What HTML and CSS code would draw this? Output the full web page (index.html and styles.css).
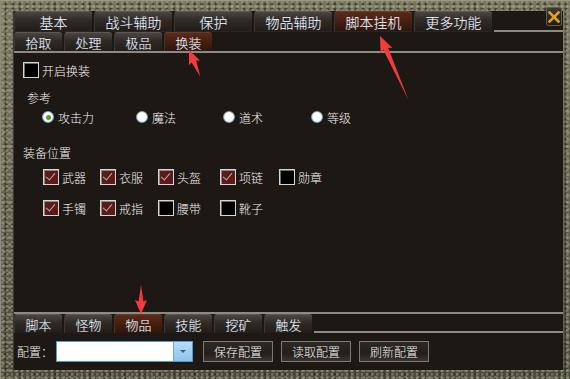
FILE: index.html
```html
<!DOCTYPE html>
<html>
<head>
<meta charset="utf-8">
<link rel="stylesheet" href="styles.css">
</head>
<body>
<div class="frame">
  <div class="panel">
    <div class="tabrow top">
      <div class="tab wide">基本</div>
      <div class="tab wide">战斗辅助</div>
      <div class="tab wide">保护</div>
      <div class="tab wide">物品辅助</div>
      <div class="tab wide active">脚本挂机</div>
      <div class="tab wide">更多功能</div>
      <div class="rest"></div>
    </div>
    <div class="tabrow sub">
      <div class="tab">拾取</div>
      <div class="tab">处理</div>
      <div class="tab">极品</div>
      <div class="tab active">换装</div>
      <div class="rest"></div>
    </div>
    <div class="content">
      <label class="check main-check"><span class="box"></span>开启换装</label>
      <div class="section-title ref">参考</div>
      <div class="radios">
        <label class="radio r1"><span class="dot on"></span>攻击力</label>
        <label class="radio r2"><span class="dot"></span>魔法</label>
        <label class="radio r3"><span class="dot"></span>道术</label>
        <label class="radio r4"><span class="dot"></span>等级</label>
      </div>
      <div class="section-title equip">装备位置</div>
      <div class="grid">
        <label class="check"><span class="box on"></span>武器</label>
        <label class="check"><span class="box on"></span>衣服</label>
        <label class="check"><span class="box on"></span>头盔</label>
        <label class="check"><span class="box on"></span>项链</label>
        <label class="check"><span class="box"></span>勋章</label>
        <label class="check"><span class="box on"></span>手镯</label>
        <label class="check"><span class="box on"></span>戒指</label>
        <label class="check"><span class="box"></span>腰带</label>
        <label class="check"><span class="box"></span>靴子</label>
      </div>
    </div>
    <div class="tabrow bottom">
      <div class="tab">脚本</div>
      <div class="tab">怪物</div>
      <div class="tab active">物品</div>
      <div class="tab">技能</div>
      <div class="tab">挖矿</div>
      <div class="tab">触发</div>
      <div class="rest"></div>
    </div>
    <div class="config">
      <span class="cfg-label">配置：</span>
      <div class="combo"><div class="combo-field"></div><div class="combo-btn"><span class="tri"></span></div></div>
      <button class="btn">保存配置</button>
      <button class="btn">读取配置</button>
      <button class="btn">刷新配置</button>
    </div>
  </div>
  <div class="close">
    <svg width="12" height="12" viewBox="0 0 12 12"><path d="M1.5 1.5 L10.5 10.5 M10.5 1.5 L1.5 10.5" stroke="#e0a020" stroke-width="2.6" stroke-linecap="square"/></svg>
  </div>
  <svg class="arrows" width="570" height="379" viewBox="0 0 570 379">
    <g fill="#f03c3c">
      <polygon transform="translate(188 49) rotate(-23)" points="0,0 6,14 2.4,12.5 0,29 -2.4,12.5 -6,14"/>
      <polygon transform="translate(379 35) rotate(-24)" points="0,0 6.5,16 2.6,14 0,70 -2.6,14 -6.5,16"/>
      <polygon transform="translate(140 313) rotate(180)" points="0,0 6,14 2.4,12.5 0,29 -2.4,12.5 -6,14"/>
    </g>
  </svg>
</div>
</body>
</html>
```
FILE: styles.css
```css
* { box-sizing: border-box; }
html, body { margin: 0; padding: 0; }
body { width: 570px; height: 379px; overflow: hidden; background: #2a2a24; font-family: "Noto Sans CJK SC", "Noto Sans", sans-serif; }

.frame {
  position: relative;
  width: 570px;
  height: 379px;
  padding: 10px 8px 10px 12px;
  background-color: #5e5d50;
  background-image:
    radial-gradient(circle at 20% 30%, rgba(160,158,130,0.55) 0 1px, transparent 2px),
    radial-gradient(circle at 70% 60%, rgba(30,30,25,0.6) 0 1px, transparent 2px),
    radial-gradient(circle at 45% 80%, rgba(190,190,160,0.45) 0 1px, transparent 2px),
    linear-gradient(180deg, #77765f 0%, #4d4c40 100%);
  background-size: 5px 4px, 7px 5px, 6px 7px, 100% 100%;
  border-top: 1px solid #9c9a80;
  border-left: 1px solid #8e8c78;
}

.panel {
  width: 550px;
  height: 359px;
  display: flex;
  flex-direction: column;
  background: #1e1814;
  border-left: 1px solid #3c3731;
}

.tabrow { display: flex; gap: 2px; height: 20px; flex: none; }
.tabrow.top { height: 21px; }
.tabrow .rest { flex: 1; }
.tabrow.top .rest { border-bottom: 2px solid #8d8a84; }
.tabrow.sub { height: 21px; border-bottom: 2px solid #8d8a84; }
.tabrow.bottom { height: 21px; border-top: 2px solid #8d8a84; }
.tabrow.bottom .rest { border-bottom: 2px solid #8d8a84; }

.tab {
  width: 48px;
  display: flex;
  align-items: center;
  justify-content: center;
  color: #f6f6f6;
  font-size: 13px;
  font-weight: 300;
  line-height: 1;
  background: linear-gradient(180deg, #4a4540 0%, #2f2a26 45%, #221d19 100%);
  border-top: 1px solid #5d5852;
  border-left: 1px solid #3b3632;
  border-radius: 3px 3px 0 0;
  text-shadow: -0.4px 0 0 rgba(120,190,255,0.45);
}
.tab.wide { width: 78px; font-size: 14px; }
.tabrow.top .tab { border-bottom: 1px solid #2a2521; }
.tab.active { background: linear-gradient(180deg, #5a2a1c 0%, #47200f 45%, #2e150d 100%); border-top-color: #6b3a2b; }

.content {
  flex: 1;
  position: relative;
  padding: 9px 0 0 9px;
  color: #f2f2f2;
  font-size: 12px;
  font-weight: 300;
}

.check { display: flex; align-items: center; gap: 3px; line-height: 15px; color: #f4f4f4; }
.box {
  width: 16px; height: 16px; flex: none;
  background: #000;
  border: 1px solid #d6d6d0;
  box-shadow: inset 1px 1px 0 #6a6a66;
  position: relative;
}
.box.on { background: #5e1a1a; box-shadow: inset 1px 1px 0 #8a8a82; }
.box.on::after {
  content: "";
  position: absolute;
  left: 4px; top: 1px;
  width: 4px; height: 8px;
  border-right: 1.5px solid #b4b0a4;
  border-bottom: 1.5px solid #b4b0a4;
  transform: rotate(40deg);
}

.section-title { color: #f2f2f2; font-size: 12px; }
.ref { margin: 11px 0 0 4px; }
.equip { margin: 20px 0 0 0; }

.radios { display: grid; grid-template-columns: 94px 87px 88px auto; margin: 4px 0 0 19px; }
.radio { display: flex; align-items: center; gap: 4px; height: 14px; }
.dot {
  width: 12px; height: 12px; border-radius: 50%;
  background: radial-gradient(circle at 50% 45%, #ffffff 0 50%, #e6eef4 70%);
  border: 1px solid #7fa3bd;
  position: relative;
  flex: none;
}
.dot.on::after {
  content: ""; position: absolute; left: 2.5px; top: 2.5px; width: 5px; height: 5px; border-radius: 50%; background: #5aa020;
}

.grid {
  display: grid;
  grid-template-columns: 57px 58px 62px 59px auto;
  row-gap: 15px;
  margin: 8px 0 0 20px;
}

.config {
  flex: none;
  height: 37px;
  display: flex;
  align-items: center;
  padding: 0 0 0 3px;
  color: #f2f2f2;
  font-size: 12px;
  font-weight: 300;
}
.cfg-label { width: 39px; }
.combo {
  width: 137px; height: 21px;
  display: flex;
  border: 1px solid #4a9adc;
  background: #fff;
  margin-right: 10px;
}
.combo-field { flex: 1; }
.combo-btn {
  width: 19px;
  background: linear-gradient(180deg, #b8dcf6, #8ec3ec);
  border-left: 1px solid #6aa8d8;
  display: flex; align-items: center; justify-content: center;
}
.tri { width: 0; height: 0; border-left: 3px solid transparent; border-right: 3px solid transparent; border-top: 3px solid #406080; }
.btn {
  width: 70px; height: 21px;
  margin-right: 8px;
  padding: 0;
  font-family: inherit;
  font-size: 12px;
  font-weight: 300;
  color: #f4f4f4;
  background: linear-gradient(180deg, #2c2824 0%, #241f1b 60%, #3a3430 100%);
  border: 1px solid #7c7874;
}

.close {
  position: absolute;
  left: 545px; top: 6px;
  width: 16px; height: 19px;
  background: linear-gradient(180deg, #3e3a34, #201d1a);
  border: 1px solid #5f5b54;
  border-radius: 2px;
  display: flex; align-items: center; justify-content: center;
}

.arrows { position: absolute; left: 0; top: 0; pointer-events: none; }
```
